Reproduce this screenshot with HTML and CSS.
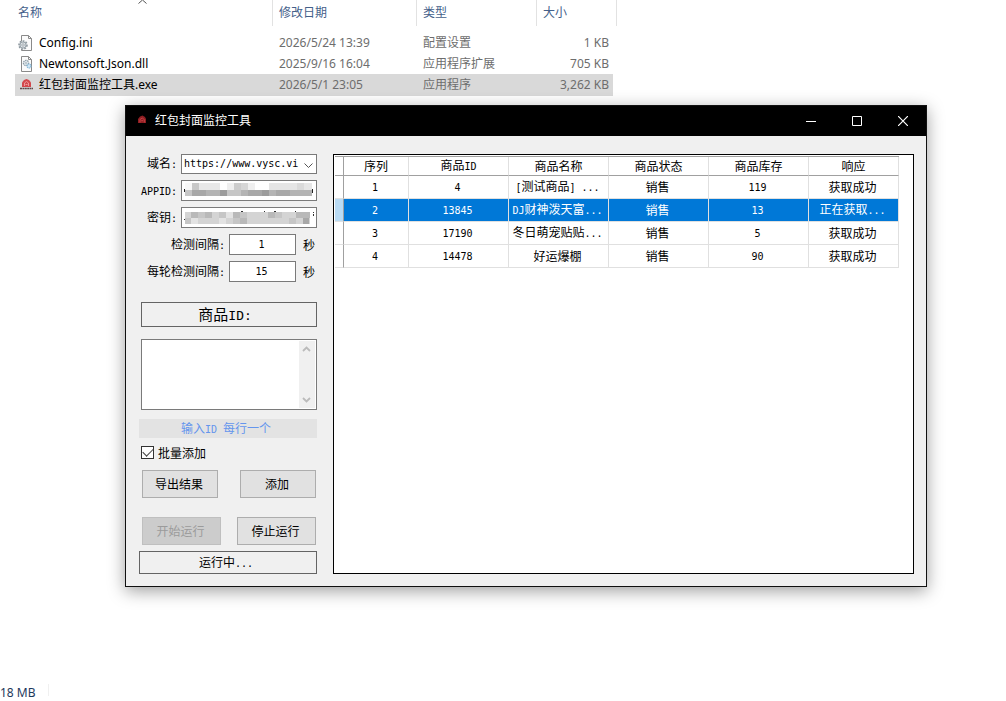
FILE: index.html
```html
<!DOCTYPE html>
<html lang="zh-CN">
<head>
<meta charset="utf-8">
<title>红包封面监控工具</title>
<link rel="stylesheet" href="styles.css">
</head>
<body>
<main class="explorer">
  <svg class="sort-mark" width="9" height="4" viewBox="0 0 9 4"><path d="M.5 3.500 4.500 0l4 3.500" fill="none" stroke="#555"/></svg>
  <table class="files">
    <colgroup><col class="c-name"><col class="c-date"><col class="c-type"><col class="c-size"></colgroup>
    <thead><tr><th>名称</th><th>修改日期</th><th>类型</th><th>大小</th></tr></thead>
    <tbody>
      <tr>
        <td><span class="file"><svg width="16" height="16" viewBox="0 0 16 16"><path d="M3.500.5h7l3 3v12h-10z" fill="#fbfbfb" stroke="#8a8a8a"/><path d="M10.500.5v3h3" fill="none" stroke="#8a8a8a"/><circle cx="5" cy="10" r="4" fill="#e8edf0" stroke="#8d979e" stroke-width="1.600" stroke-dasharray="1.800 1.200"/><circle cx="5" cy="10" r="3" fill="#dfe5e8" stroke="#8d979e" stroke-width=".8"/><circle cx="5" cy="10" r="1.200" fill="#fff" stroke="#8d979e" stroke-width=".8"/></svg>Config.ini</span></td>
        <td>2026/5/24 13:39</td><td>配置设置</td><td>1 KB</td>
      </tr>
      <tr>
        <td><span class="file"><svg width="16" height="16" viewBox="0 0 16 16"><path d="M3.500.5h7l3 3v12h-10z" fill="#fbfbfb" stroke="#8a8a8a"/><path d="M10.500.5v3h3" fill="none" stroke="#8a8a8a"/><circle cx="8" cy="7" r="2.600" fill="#e4ebef" stroke="#8d9ca6" stroke-width="1.300" stroke-dasharray="1.500 .7"/><circle cx="8" cy="7" r=".8" fill="#8d9ca6"/><circle cx="11" cy="10" r="2" fill="#cfe6f5" stroke="#83b5d6" stroke-width="1.200" stroke-dasharray="1.300 .6"/></svg>Newtonsoft.Json.dll</span></td>
        <td>2025/9/16 16:04</td><td>应用程序扩展</td><td>705 KB</td>
      </tr>
      <tr class="selected">
        <td><span class="file"><svg width="16" height="16" viewBox="0 0 16 16"><path d="M4 10V5.500L6 3l2.500-1L11 3l2 2.500V10z" fill="#d2474c"/><path d="M6.500 9V6l2-1.500 2 1.500v3M7.500 7.500h2" fill="none" stroke="#f0a0a0" stroke-width=".9"/><path d="M2 11.500h13" stroke="#5e4a4c" stroke-width="1.500" stroke-dasharray="2 .4"/></svg>红包封面监控工具.exe</span></td>
        <td>2026/5/1 23:05</td><td>应用程序</td><td>3,262 KB</td>
      </tr>
    </tbody>
  </table>
  <footer class="status"><span>18 MB</span></footer>
</main>

<section class="window">
  <header class="titlebar">
    <svg class="app-icon" width="14" height="14" viewBox="0 0 14 14"><path d="M3 9V5l2-2.500L7.500 1.500 10 3l1 2v4z" fill="#8e1e22"/><path d="M5 8.500V5.500L7.200 4 9.300 5.500v3M6.200 6.700h2" fill="none" stroke="#d04a4e" stroke-width=".8"/></svg>
    <h1>红包封面监控工具</h1>
    <button type="button" aria-label="最小化"><svg width="10" height="10" viewBox="0 0 10 10"><path d="M0 5.500h10" stroke="#fff"/></svg></button>
    <button type="button" aria-label="最大化"><svg width="10" height="10" viewBox="0 0 10 10"><path d="M.5.5h9v9h-9z" fill="none" stroke="#fff"/></svg></button>
    <button type="button" aria-label="关闭"><svg width="10" height="10" viewBox="0 0 10 10"><path d="m0 0 10 10M10 0 0 10" stroke="#fff" stroke-width="1.200"/></svg></button>
  </header>
  <div class="content">
    <form class="side">
      <div class="fields">
        <div class="field short"><label for="domain">域名<i>:</i></label>
          <div class="box wide"><select id="domain"><option>https://www.vysc.vi</option></select><svg class="arrow" width="9" height="6" viewBox="0 0 9 6"><path d="m.5.5 4 4 4-4" fill="none" stroke="#555"/></svg></div></div>
        <div class="field"><label for="appid"><i>APPID:</i></label>
          <div class="box wide"><input id="appid" type="text"><svg class="mosaic" width="134" height="16" viewBox="0 0 134 16">
            <path d="M3 1h7v7H3z" fill="#f8f8f8"/><path d="M10 1h7v7h-7z" fill="#c8c8c8"/><path d="M17 1h21v7H17z" fill="#e8e8e8"/><path d="M45 1h7v7h-7z" fill="#efefef"/><path d="M52 1h7v7h-7z" fill="#ccc"/><path d="M59 1h7v7h-7z" fill="#d6d6d6"/><path d="M66 1h7v7h-7z" fill="#efefef"/><path d="M87 1h28v7H87z" fill="#e5e5e5"/><path d="M115 1h7v7h-7z" fill="#dadada"/><path d="M122 1h8v7h-8z" fill="#e6e6e6"/>
            <path d="M3 8h127v6H3z" fill="#b4b4b4"/><path d="M3 8h7v6H3zM45 8h14v6H45z" fill="#c6c6c6"/><path d="M10 8h14v6H10zM66 8h14v6H66zM94 8h14v6H94z" fill="#a8a8a8"/><path d="M38 8h7v6h-7zM80 8h7v6h-7z" fill="#9c9c9c"/><path d="M2 7h1v3H2zM130 7h1v4h-1z" fill="#222"/></svg></div></div>
        <div class="field"><label for="secret">密钥<i>:</i></label>
          <div class="box wide"><input id="secret" type="text"><svg class="mosaic" width="134" height="16" viewBox="0 0 134 16">
            <path d="M3 3h125v12H3z" fill="#d4d4d4"/><path d="M9 3h7v6H9zM23 3h7v6h-7zM51 3h7v6h-7zM58 9h7v6h-7zM86 3h7v6h-7zM114 3h14v6h-14z" fill="#b9b9b9"/><path d="M16 3h7v6h-7zM37 3h7v6h-7zM58 3h7v6h-7zM3 9h6v6H3zM51 9h7v6h-7zM93 3h7v6h-7zM107 9h7v6h-7z" fill="#c6c6c6"/><path d="M9 9h7v6H9zM44 3h7v6h-7zM37 9h7v6h-7z" fill="#e3e3e3"/><path d="M121 9h6v6h-6z" fill="#a8a8a8"/><path d="M59 2h2v1h-2zM82 2h1v1h-1zM92 2h2v1h-2zM113 2h1v1h-1zM131 3h1v1h-1zM131 5h1v2h-1zM2 10h1v1H2z" fill="#333"/></svg></div></div>
        <div class="field"><label for="interval">检测间隔<i>:</i></label><input class="box num" id="interval" type="text" value="1"><span class="unit">秒</span></div>
        <div class="field"><label for="round">每轮检测间隔<i>:</i></label><input class="box num" id="round" type="text" value="15"><span class="unit">秒</span></div>
      </div>
      <label class="id-title" for="ids">商品<i>ID: </i></label>
      <div class="memo"><textarea id="ids"></textarea>
        <div class="scroll"><svg width="9" height="6" viewBox="0 0 9 6"><path d="m1 5 3.500-3.500L8 5" fill="none" stroke="#bbb" stroke-width="1.800"/></svg><svg width="9" height="6" viewBox="0 0 9 6"><path d="m1 1 3.500 3.500L8 1" fill="none" stroke="#bbb" stroke-width="1.800"/></svg></div></div>
      <p class="hint">输入<i>ID </i>每行一个</p>
      <label class="check"><input type="checkbox" checked>批量添加</label>
      <div class="buttons first"><button type="button">导出结果</button><button type="button">添加</button></div>
      <div class="buttons second"><button type="button" disabled>开始运行</button><button type="button">停止运行</button></div>
      <p class="state">运行中<i>...</i></p>
    </form>
    <div class="panel">
      <table class="grid">
        <colgroup><col class="g-head"><col class="g-no"><col class="g-mid"><col class="g-mid"><col class="g-mid"><col class="g-mid"><col class="g-end"></colgroup>
        <thead><tr><th></th><th>序列</th><th>商品<i>ID</i></th><th>商品名称</th><th>商品状态</th><th>商品库存</th><th>响应</th></tr></thead>
        <tbody>
          <tr><th></th><td><i>1</i></td><td><i>4</i></td><td><i>[</i>测试商品<i>] ...</i></td><td>销售</td><td><i>119</i></td><td>获取成功</td></tr>
          <tr class="current"><th></th><td><i>2</i></td><td><i>13845</i></td><td><i>DJ</i>财神泼天富<i>...</i></td><td>销售</td><td><i>13</i></td><td>正在获取<i>...</i></td></tr>
          <tr><th></th><td><i>3</i></td><td><i>17190</i></td><td>冬日萌宠贴贴<i>...</i></td><td>销售</td><td><i>5</i></td><td>获取成功</td></tr>
          <tr><th></th><td><i>4</i></td><td><i>14478</i></td><td>好运爆棚</td><td>销售</td><td><i>90</i></td><td>获取成功</td></tr>
        </tbody>
      </table>
    </div>
  </div>
</section>
</body>
</html>
```
FILE: styles.css
```css
* { box-sizing: border-box; }
body {
  margin: 0;
  background: #fff;
  color: #000;
  font: 12px/16px "Noto Sans", "Noto Sans CJK SC", sans-serif;
}
h1, p { margin: 0; font-size: inherit; font-weight: normal; }
svg { display: block; flex: none; }

/* file list behind the window */
.explorer {
  min-height: 100vh;
  display: flex;
  flex-direction: column;
  position: relative;
}
.sort-mark { position: absolute; left: 138px; top: 0; }
.files {
  width: 602px;
  margin-left: 15px;
  border-collapse: separate;
  border-spacing: 0;
  table-layout: fixed;
}
.c-name { width: 258px; }
.c-date { width: 144px; }
.c-type { width: 120px; }
.c-size { width: 80px; }
.files th {
  height: 26px;
  padding: 0 6px;
  border-right: 1px solid #e2e2e2;
  color: #44608a;
  font-weight: normal;
  text-align: left;
}
.files th:first-child { padding-left: 3px; }
.files tbody::before { content: ""; display: block; height: 6px; }
.files td {
  height: 21px;
  padding: 0 6px;
  color: #6d6d6d;
  white-space: nowrap;
}
.files td:first-child { padding-left: 3px; color: #000; }
.files td:last-child { padding-right: 8px; text-align: right; }
.file { display: flex; align-items: center; gap: 5px; }
.files .selected td { height: 22px; background: #d9d9d9; }
.files .selected td:last-child { background: linear-gradient(#d9d9d9, #d9d9d9) left / calc(100% - 4px) 100% no-repeat; }
.status { margin-top: auto; height: 17px; color: #1e395b; display: flex; }
.status span { padding-right: 12px; height: 12px; line-height: 17px; border-right: 1px solid #f0f0f0; }

/* application window */
.window {
  position: absolute;
  left: 125px;
  right: 79px;
  top: 105px;
  border: 1px solid #111;
  background: #f0f0f0;
  box-shadow: 0 4px 16px rgba(0, 0, 0, .38);
}
.titlebar {
  height: 30px;
  display: flex;
  align-items: center;
  padding-left: 9px;
  background: #000;
  color: #fff;
}
.titlebar h1 { margin-left: 6px; margin-right: auto; }
.titlebar button {
  width: 46px;
  height: 30px;
  display: grid;
  place-items: center;
  padding: 0;
  border: 0;
  background: none;
}
.content {
  display: grid;
  grid-template-columns: 178px 1fr;
  gap: 16px;
  padding: 18px 12px 12px 13px;
  font-family: "Noto Sans CJK SC", sans-serif;
}
.content i { font: 10px/16px "DejaVu Sans Mono", monospace; white-space: pre; }
.side { display: flex; flex-direction: column; }
.fields { display: grid; gap: 6px; }
.field { display: flex; align-items: center; justify-content: flex-end; height: 21px; }
.field label { margin-right: 4px; white-space: nowrap; }
.box {
  height: 21px;
  border: 1px solid #7a7a7a;
  border-radius: 0;
  background: #fff;
  font: 10px/16px "DejaVu Sans Mono", monospace;
}
.wide { width: 136px; position: relative; }
.short, .short .box { height: 20px; }
.wide input, .wide select {
  width: 100%;
  height: 100%;
  display: block;
  padding: 0 2px;
  border: 0;
  background: none;
  color: #000;
  font: inherit;
  appearance: none;
}
.arrow { position: absolute; right: 3px; top: 8px; }
.mosaic { position: absolute; left: 0; top: 1px; }
.num { width: 67px; padding: 0 4px 0 2px; text-align: center; }
.unit { width: 21px; padding-left: 7px; }
.id-title {
  height: 25px;
  margin: 20px 0 12px 2px;
  border: 1px solid #646464;
  font-size: 15px;
  line-height: 22px;
  text-align: center;
}
.id-title i { font-size: 13px; }
.memo {
  display: flex;
  height: 71px;
  margin-left: 2px;
  padding: 1px;
  border: 1px solid #7a7a7a;
  background: #fff;
}
.memo textarea { flex: 1; min-width: 0; border: 0; padding: 0; resize: none; background: none; overflow: hidden; }
.scroll {
  width: 16px;
  display: flex;
  flex-direction: column;
  align-items: center;
  justify-content: space-between;
  padding: 5px 2px 5px 0;
  background: #f0f0f0;
}
.hint {
  height: 19px;
  margin: 9px 0 8px;
  padding-right: 4px;
  background: #e3e3e3;
  color: #6495ed;
  line-height: 18px;
  text-align: center;
}
.check { display: flex; align-items: center; gap: 4px; height: 13px; margin-left: 2px; }
.check input {
  appearance: none;
  width: 13px;
  height: 13px;
  margin: 0;
  display: grid;
  place-items: center;
  border: 1px solid #333;
  background: #fff;
}
.check input:checked::before {
  content: "";
  width: 9px;
  height: 5px;
  margin-bottom: 3px;
  border: solid #444;
  border-width: 0 0 1px 1px;
  rotate: -45deg;
}
.buttons { display: flex; justify-content: space-between; padding: 0 1px 0 3px; }
.buttons button {
  width: 76px;
  height: 28px;
  padding: 0 2px 0 0;
  border: 1px solid #adadad;
  background: #e1e1e1;
  color: #000;
  font: inherit;
}
.buttons button:disabled { border-color: #bfbfbf; background: #ccc; color: #9b9b9b; }
.first { margin: 11px 0 19px; }
.second { margin-bottom: 6px; }
.second button { width: 79px; }
.state { height: 23px; padding-right: 4px; border: 1px solid #646464; line-height: 20px; text-align: center; }

.panel { min-width: 0; padding: 1px 14px 1px 1px; border: 1px solid #000; background: #fff; }
.grid {
  width: 100%;
  border-collapse: separate;
  border-spacing: 0;
  table-layout: fixed;
  border-top: 1px solid #a0a0a0;
}
.g-head { width: 9px; }
.g-no { width: 65px; }
.g-mid { width: 100px; }
.grid th, .grid td {
  height: 23px;
  padding: 0;
  border-right: 1px solid #e0e0e0;
  border-bottom: 1px solid #e0e0e0;
  font-weight: normal;
  text-align: center;
  white-space: nowrap;
}
.grid td { padding-right: 2px; }
.grid thead th { height: 18px; line-height: 16px; border-bottom-color: #a0a0a0; }
.grid tr th:first-child { border-right-color: #a0a0a0; }
.current th { background: #b9dbf4; }
.current td { background: #0078d7; color: #fff; }
```
